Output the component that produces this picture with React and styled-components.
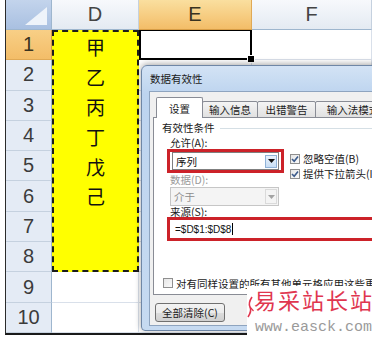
import React from "react";
import styled, { createGlobalStyle } from "styled-components";

const cjk = `"Noto Sans CJK SC", "Liberation Sans", sans-serif`;

const GlobalStyle = createGlobalStyle`
  html, body {
    margin: 0;
    padding: 0;
    background: #fff;
  }
  body {
    font-family: ${cjk};
  }
`;

const Page = styled.div`
  position: relative;
  width: 372px;
  height: 343px;
  overflow: hidden;
  background: #fff;
`;

/* ---------- spreadsheet ---------- */

const Sheet = styled.div`
  display: grid;
  grid-template-columns: 46px 87px 113px 1fr;
  grid-template-rows: 30px repeat(10, 30.3px);
  margin-left: 5px;
  border-left: 1px solid #2b2b2b;
  border-bottom: 2px solid #1a1a1a;
  font-family: "Liberation Sans", sans-serif;
`;

const Corner = styled.div`
  position: relative;
  background: linear-gradient(#c3d4ec, #a9c0e1);
  border-right: 1px solid #9eb6ce;
  border-bottom: 1px solid #9eb6ce;

  &::after {
    content: "";
    position: absolute;
    right: 4px;
    bottom: 4px;
    width: 22px;
    height: 18px;
    background: #eef3fa;
    clip-path: polygon(100% 0, 100% 100%, 0 100%);
  }
`;

const ColHead = styled.div`
  display: flex;
  align-items: center;
  justify-content: center;
  font-size: 20px;
  color: ${(p) => (p.$active ? "#3a3320" : "#444")};
  background: ${(p) =>
    p.$active
      ? "linear-gradient(#fadf9f, #f3bd68)"
      : "linear-gradient(#f7f9fc, #e4eaf2)"};
  border-right: 1px solid ${(p) => (p.$active ? "#e0a955" : "#c5d1df")};
  border-bottom: 1px solid ${(p) => (p.$active ? "#d79d46" : "#9eb6ce")};
`;

const RowHead = styled.div`
  display: flex;
  align-items: center;
  justify-content: center;
  font-size: 20px;
  color: ${(p) => (p.$active ? "#3a3320" : "#3b3b3b")};
  background: ${(p) =>
    p.$active ? "linear-gradient(#f8cf86, #f3bd68)" : "#e4ebf5"};
  border-right: 1px solid ${(p) => (p.$active ? "#d79d46" : "#9eb6ce")};
  border-bottom: 1px solid ${(p) => (p.$active ? "#e0a955" : "#c5d1df")};
`;

const Marked = styled.div`
  grid-column: 2;
  grid-row: 2 / span 8;
  display: grid;
  grid-template-rows: repeat(8, 1fr);
  background: #ffff00;
  border: 2px dashed #1b1b1b;
  font-family: ${cjk};
  font-size: 19px;
  color: #111;

  span {
    display: flex;
    align-items: center;
    justify-content: center;
  }
`;

const Cell = styled.div`
  background: #fff;
  border-right: 1px solid #d9e0ea;
  border-bottom: 1px solid #d9e0ea;
`;

const Selected = styled.div`
  position: relative;
  background: #fff;
  border: 2px solid #000;
  border-top-width: 1px;

  &::after {
    content: "";
    position: absolute;
    right: -5px;
    bottom: -5px;
    width: 6px;
    height: 6px;
    background: #000;
    border: 1px solid #fff;
  }
`;

/* ---------- dialog ---------- */

const Dialog = styled.div`
  position: absolute;
  left: 141px;
  top: 65px;
  width: 262px;
  height: 266px;
  box-sizing: border-box;
  display: flex;
  flex-direction: column;
  padding: 0 0 4px 7px;
  border: 1px solid #6f87a6;
  border-radius: 6px 6px 4px 4px;
  background: linear-gradient(#d3e3f5, #bdd4ef 28px, #c6daf1);
  box-shadow: 0 -1px 6px rgba(0, 0, 0, 0.35);
  font-family: ${cjk};
  font-size: 10.5px;
  color: #1a1a1a;
`;

const Title = styled.div`
  height: 25px;
  display: flex;
  align-items: center;
  padding-left: 1px;
  font-size: 10.5px;
  color: #1b1b1b;
`;

const Client = styled.div`
  flex: 1;
  display: flex;
  flex-direction: column;
  padding: 5px 0 0 3px;
  background: #f0f0f0;
  border: 1px solid #8ea4bf;
`;

const TabStrip = styled.div`
  display: flex;
  align-items: flex-end;
  height: 21px;
  margin-left: 4px;
  margin-bottom: -1px;
  position: relative;
  z-index: 1;
`;

const Tab = styled.div`
  width: ${(p) => p.$w}px;
  height: ${(p) => (p.$active ? 21 : 17)}px;
  box-sizing: border-box;
  flex: none;
  display: flex;
  align-items: center;
  justify-content: center;
  margin-left: -1px;
  border: 1px solid #898c95;
  border-bottom: ${(p) => (p.$active ? "none" : "1px solid #898c95")};
  border-radius: 2px 2px 0 0;
  background: ${(p) =>
    p.$active ? "#fff" : "linear-gradient(#f4f4f4, #e1e1e1)"};
  font-size: 10.5px;
`;

const Panel = styled.div`
  width: 300px;
  height: 178px;
  box-sizing: border-box;
  flex: none;
  display: flex;
  flex-direction: column;
  padding: 3px 0 0 8px;
  border: 1px solid #898c95;
  background: #fff;
`;

const Group = styled.div`
  display: flex;
  align-items: center;
  height: 14px;
  line-height: 14px;

  &::after {
    content: "";
    flex: 1;
    height: 1px;
    margin-left: 5px;
    background: #d5dfe5;
  }
`;

const Label = styled.div`
  height: 14px;
  line-height: 14px;
  margin: ${(p) => p.$m || "0"};
  margin-left: 8px;
  color: ${(p) => (p.$disabled ? "#9a9a9a" : "#1a1a1a")};
`;

const Row = styled.div`
  display: flex;
  align-items: flex-start;
  height: 24px;
  margin-top: -1px;
`;

const RedBox = styled.div`
  width: ${(p) => p.$w}px;
  height: 24px;
  box-sizing: border-box;
  flex: none;
  display: flex;
  margin: ${(p) => p.$m || "0"};
  margin-left: 5px;
  padding-left: 2px;
  border: 3px solid #cc2229;
`;

const Combo = styled.div`
  width: ${(p) => p.$w}px;
  height: ${(p) => p.$h}px;
  box-sizing: border-box;
  flex: none;
  display: flex;
  align-items: center;
  justify-content: space-between;
  padding: 0 1px 0 3px;
  margin-left: ${(p) => p.$ml || 0}px;
  border: 1px solid ${(p) => (p.$disabled ? "#c6c6c6" : "#7f7f7f")};
  background: ${(p) => (p.$disabled ? "#f4f4f4" : "#fff")};
  color: ${(p) => (p.$disabled ? "#8c8c8c" : "#111")};
  font-size: 10.5px;
`;

const DropBtn = styled.div`
  width: 12px;
  height: ${(p) => (p.$disabled ? 15 : 13)}px;
  box-sizing: border-box;
  display: flex;
  align-items: center;
  justify-content: center;
  border: 1px solid ${(p) => (p.$disabled ? "#dadada" : "#8fb2d8")};
  background: ${(p) =>
    p.$disabled ? "#f4f4f4" : "linear-gradient(#e8f2fc, #c9def5)"};
`;

const Input = styled.div`
  flex: 1;
  height: 18px;
  display: flex;
  align-items: center;
  padding-left: 3px;
  font-family: "Liberation Sans", sans-serif;
  font-size: 10px;
  color: #111;
  background: #fff;

  &::after {
    content: "";
    width: 1px;
    height: 12px;
    margin-left: 1px;
    background: #000;
  }
`;

const Checks = styled.div`
  display: flex;
  flex-direction: column;
  margin-left: 6px;
  padding-top: 2px;
`;

const CheckRow = styled.div`
  display: flex;
  align-items: center;
  height: ${(p) => p.$h || 15}px;
  margin: ${(p) => p.$m || "0"};
  white-space: nowrap;
`;

const Box = styled.span`
  width: 10px;
  height: 10px;
  box-sizing: border-box;
  flex: none;
  display: flex;
  align-items: center;
  justify-content: center;
  margin-right: 3px;
  border: 1px solid #8f8f8f;
  background: linear-gradient(135deg, #e6e6e6, #fafafa);
`;

const Button = styled.div`
  width: 70px;
  height: 19px;
  box-sizing: border-box;
  display: flex;
  align-items: center;
  justify-content: center;
  margin: 8px 0 0 2px;
  border: 1px solid #707070;
  border-radius: 3px;
  background: linear-gradient(#f3f3f3, #ebebeb 50%, #dcdcdc 51%, #d0d0d0);
  font-size: 10.5px;
`;

/* ---------- watermark ---------- */

const Watermark = styled.div`
  position: absolute;
  left: 247px;
  top: 286px;
  width: 125px;
  height: 57px;
  display: flex;
  background: #fff;
`;

const Mark = styled.svg`
  flex: none;
  margin-top: 10px;
`;

const WmText = styled.div`
  display: flex;
  flex-direction: column;
`;

const WmTitle = styled.div`
  height: 26px;
  line-height: 26px;
  padding-left: -1px;
  font-family: ${cjk};
  font-size: 22px;
  letter-spacing: 2px;
  color: #e0364f;
  white-space: nowrap;
`;

const WmUrl = styled.div`
  margin-top: 8px;
  padding-left: 1px;
  font-family: "Liberation Mono", monospace;
  font-size: 15px;
  line-height: 16px;
  color: #9a9a9a;
  white-space: nowrap;
`;

const Tick = () => (
  <svg width="8" height="8" viewBox="0 0 8 8">
    <path d="M1 4 L3.2 6.3 L7 1.5" fill="none" stroke="#3c5b8c" strokeWidth="1.6" />
  </svg>
);

const Caret = ({ color }) => (
  <svg width="7" height="4" viewBox="0 0 7 4">
    <path d="M0 0 H7 L3.5 4 Z" fill={color} />
  </svg>
);

const rows = [1, 2, 3, 4, 5, 6, 7, 8, 9, 10];
const stems = ["甲", "乙", "丙", "丁", "戊", "己", "", ""];

export default function App() {
  return (
    <Page>
      <GlobalStyle />
      <Sheet>
        <Corner />
        <ColHead>D</ColHead>
        <ColHead $active>E</ColHead>
        <ColHead>F</ColHead>

        {rows.map((r) => (
          <React.Fragment key={r}>
            <RowHead $active={r === 1} style={{ gridRow: r + 1, gridColumn: 1 }}>
              {r}
            </RowHead>
            {r > 8 && <Cell style={{ gridRow: r + 1, gridColumn: 2 }} />}
            {r === 1 ? (
              <Selected style={{ gridRow: 2, gridColumn: 3 }} />
            ) : (
              <Cell style={{ gridRow: r + 1, gridColumn: 3 }} />
            )}
            <Cell style={{ gridRow: r + 1, gridColumn: 4 }} />
          </React.Fragment>
        ))}

        <Marked>
          {stems.map((s, i) => (
            <span key={i}>{s}</span>
          ))}
        </Marked>
      </Sheet>

      <Dialog>
        <Title>数据有效性</Title>
        <Client>
          <TabStrip>
            <Tab $w={47} $active>设置</Tab>
            <Tab $w={56}>输入信息</Tab>
            <Tab $w={59}>出错警告</Tab>
            <Tab $w={76}>输入法模式</Tab>
          </TabStrip>
          <Panel>
            <Group>有效性条件</Group>
            <Label $m="1px 0 0">允许(A):</Label>
            <Row>
              <RedBox $w={117}>
                <Combo $w={107} $h={18}>
                  序列
                  <DropBtn>
                    <Caret color="#111" />
                  </DropBtn>
                </Combo>
              </RedBox>
              <Checks>
                <CheckRow>
                  <Box>
                    <Tick />
                  </Box>
                  忽略空值(B)
                </CheckRow>
                <CheckRow>
                  <Box>
                    <Tick />
                  </Box>
                  提供下拉箭头(I)
                </CheckRow>
              </Checks>
            </Row>
            <Label $disabled>数据(D):</Label>
            <Combo $w={109} $h={19} $ml={8} $disabled>
              介于
              <DropBtn $disabled>
                <Caret color="#a4a4a4" />
              </DropBtn>
            </Combo>
            <Label $m="-1px 0 0">来源(S):</Label>
            <RedBox $w={240} $m="-2px 0 0">
              <Input>=$D$1:$D$8</Input>
            </RedBox>
            <CheckRow $h={14} $m="35px 0 0 1px">
              <Box />
              对有同样设置的所有其他单元格应用这些更改(P)
            </CheckRow>
          </Panel>
          <Button>全部清除(C)</Button>
        </Client>
      </Dialog>

      <Watermark>
        <Mark width="7" height="22" viewBox="0 0 7 22">
          <path d="M5 1 Q1 7 3 11 Q5 15 1 21" fill="none" stroke="#e0364f" strokeWidth="1.6" />
          <path d="M3 11 L6.5 15" fill="none" stroke="#e0364f" strokeWidth="1.2" />
        </Mark>
        <WmText>
          <WmTitle>易采站长站</WmTitle>
          <WmUrl>www.easck.com</WmUrl>
        </WmText>
      </Watermark>
    </Page>
  );
}
